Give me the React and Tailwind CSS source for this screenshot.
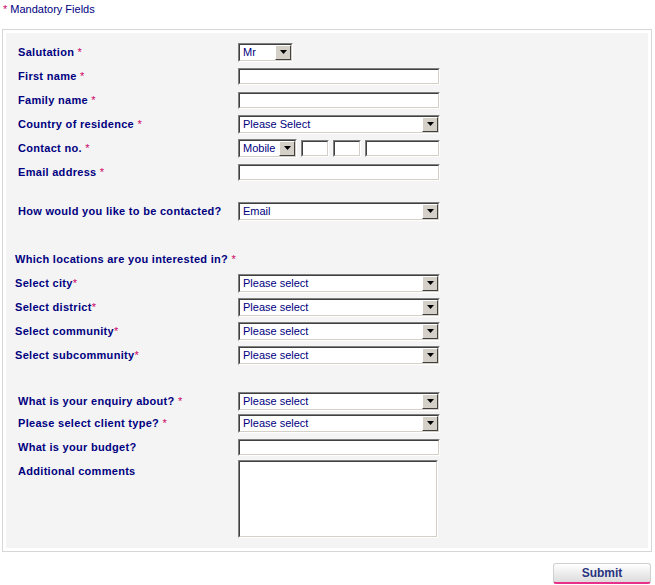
import React from 'react';

const Star = ({ gap = true }) => (
  <span className="text-[#cc0066] font-normal">{gap ? ' *' : '*'}</span>
);

// classic sunken field border
const Inset = ({ className = '', children }) => (
  <div className={`border border-t-[#808080] border-l-[#808080] border-b-white border-r-white ${className}`}>
    <div className="h-full border border-t-[#404040] border-l-[#404040] border-b-[#d4d0c8] border-r-[#d4d0c8] bg-white flex items-center">
      {children}
    </div>
  </div>
);

const TextInput = ({ width = 'w-[202px]' }) => <Inset className={`${width} h-[17px]`} />;

const Select = ({ value, width = 'w-[202px]' }) => (
  <Inset className={`${width} h-[19px]`}>
    <span className="flex-1 pl-[3px] text-[11px] leading-none text-[#000080] truncate">{value}</span>
    <span className="w-[16px] h-full bg-[#d4d0c8] border border-t-white border-l-white border-b-[#404040] border-r-[#404040] flex items-center justify-center">
      <svg width="7" height="4" viewBox="0 0 7 4">
        <polygon points="0,0 7,0 3.5,4" fill="#000" />
      </svg>
    </span>
  </Inset>
);

const Row = ({ label, indent = 'pl-[12px]', h = 'h-[24px]', children }) => (
  <div className={`flex items-center ${h}`}>
    <div className={`w-[232px] ${indent} pt-[1px] font-bold text-[11px] tracking-[0.3px] text-[#000080]`}>{label}</div>
    <div className="flex items-center">{children}</div>
  </div>
);

const App = () => {
  return (
    <div className="w-[655px] h-[585px] bg-white font-['Liberation_Sans',Arial,sans-serif]">
      <div className="h-[29px] pl-[3px] pt-[3px] text-[11px] leading-[13px] text-[#000080]">
        <span className="text-[#cc0066]">*</span> Mandatory Fields
      </div>

      <div className="ml-[2px] w-[650px] border border-[#d6d6d6] p-[3px]">
        <div className="bg-[#f4f4f4] pt-[7px] pb-[10px]">
          <Row label={<>Salutation<Star /></>}>
            <Select value="Mr" width="w-[55px]" />
          </Row>
          <Row label={<>First name<Star /></>}>
            <TextInput />
          </Row>
          <Row label={<>Family name<Star /></>}>
            <TextInput />
          </Row>
          <Row label={<>Country of residence<Star /></>}>
            <Select value="Please Select" />
          </Row>
          <Row label={<>Contact no.<Star /></>}>
            <div className="flex items-center gap-[4px]">
              <Select value="Mobile" width="w-[59px]" />
              <TextInput width="w-[28px]" />
              <TextInput width="w-[28px]" />
              <TextInput width="w-[75px]" />
            </div>
          </Row>
          <Row label={<>Email address<Star /></>}>
            <TextInput />
          </Row>

          <div className="h-[15px]" />
          <Row label="How would you like to be contacted?">
            <Select value="Email" />
          </Row>

          <div className="h-[24px]" />
          <Row label={<>Which locations are you interested in?<Star /></>} indent="pl-[9px]" />
          <Row label={<>Select city<Star gap={false} /></>} indent="pl-[9px]">
            <Select value="Please select" />
          </Row>
          <Row label={<>Select district<Star gap={false} /></>} indent="pl-[9px]">
            <Select value="Please select" />
          </Row>
          <Row label={<>Select community<Star gap={false} /></>} indent="pl-[9px]">
            <Select value="Please select" />
          </Row>
          <Row label={<>Select subcommunity<Star gap={false} /></>} indent="pl-[9px]">
            <Select value="Please select" />
          </Row>

          <div className="h-[23px]" />
          <Row label={<>What is your enquiry about?<Star /></>} h="h-[22px]">
            <Select value="Please select" />
          </Row>
          <Row label={<>Please select client type?<Star /></>} h="h-[22px]">
            <Select value="Please select" />
          </Row>
          <Row label="What is your budget?" h="h-[26px]">
            <TextInput />
          </Row>
          <div className="flex items-start">
            <div className="w-[232px] pl-[12px] pt-[3px] font-bold text-[11px] tracking-[0.3px] text-[#000080]">
              Additional comments
            </div>
            <Inset className="w-[200px] h-[78px]" />
          </div>
        </div>
      </div>

      <div className="flex justify-end pr-[4px] mt-[11px]">
        <button className="w-[98px] h-[21px] rounded-[3px] border border-[#d0d0d0] border-b-2 border-b-[#e8308a] bg-gradient-to-b from-white to-[#dcdcdc] text-[12px] font-bold text-[#2a3580] leading-none">
          Submit
        </button>
      </div>
    </div>
  );
};

export default App;
